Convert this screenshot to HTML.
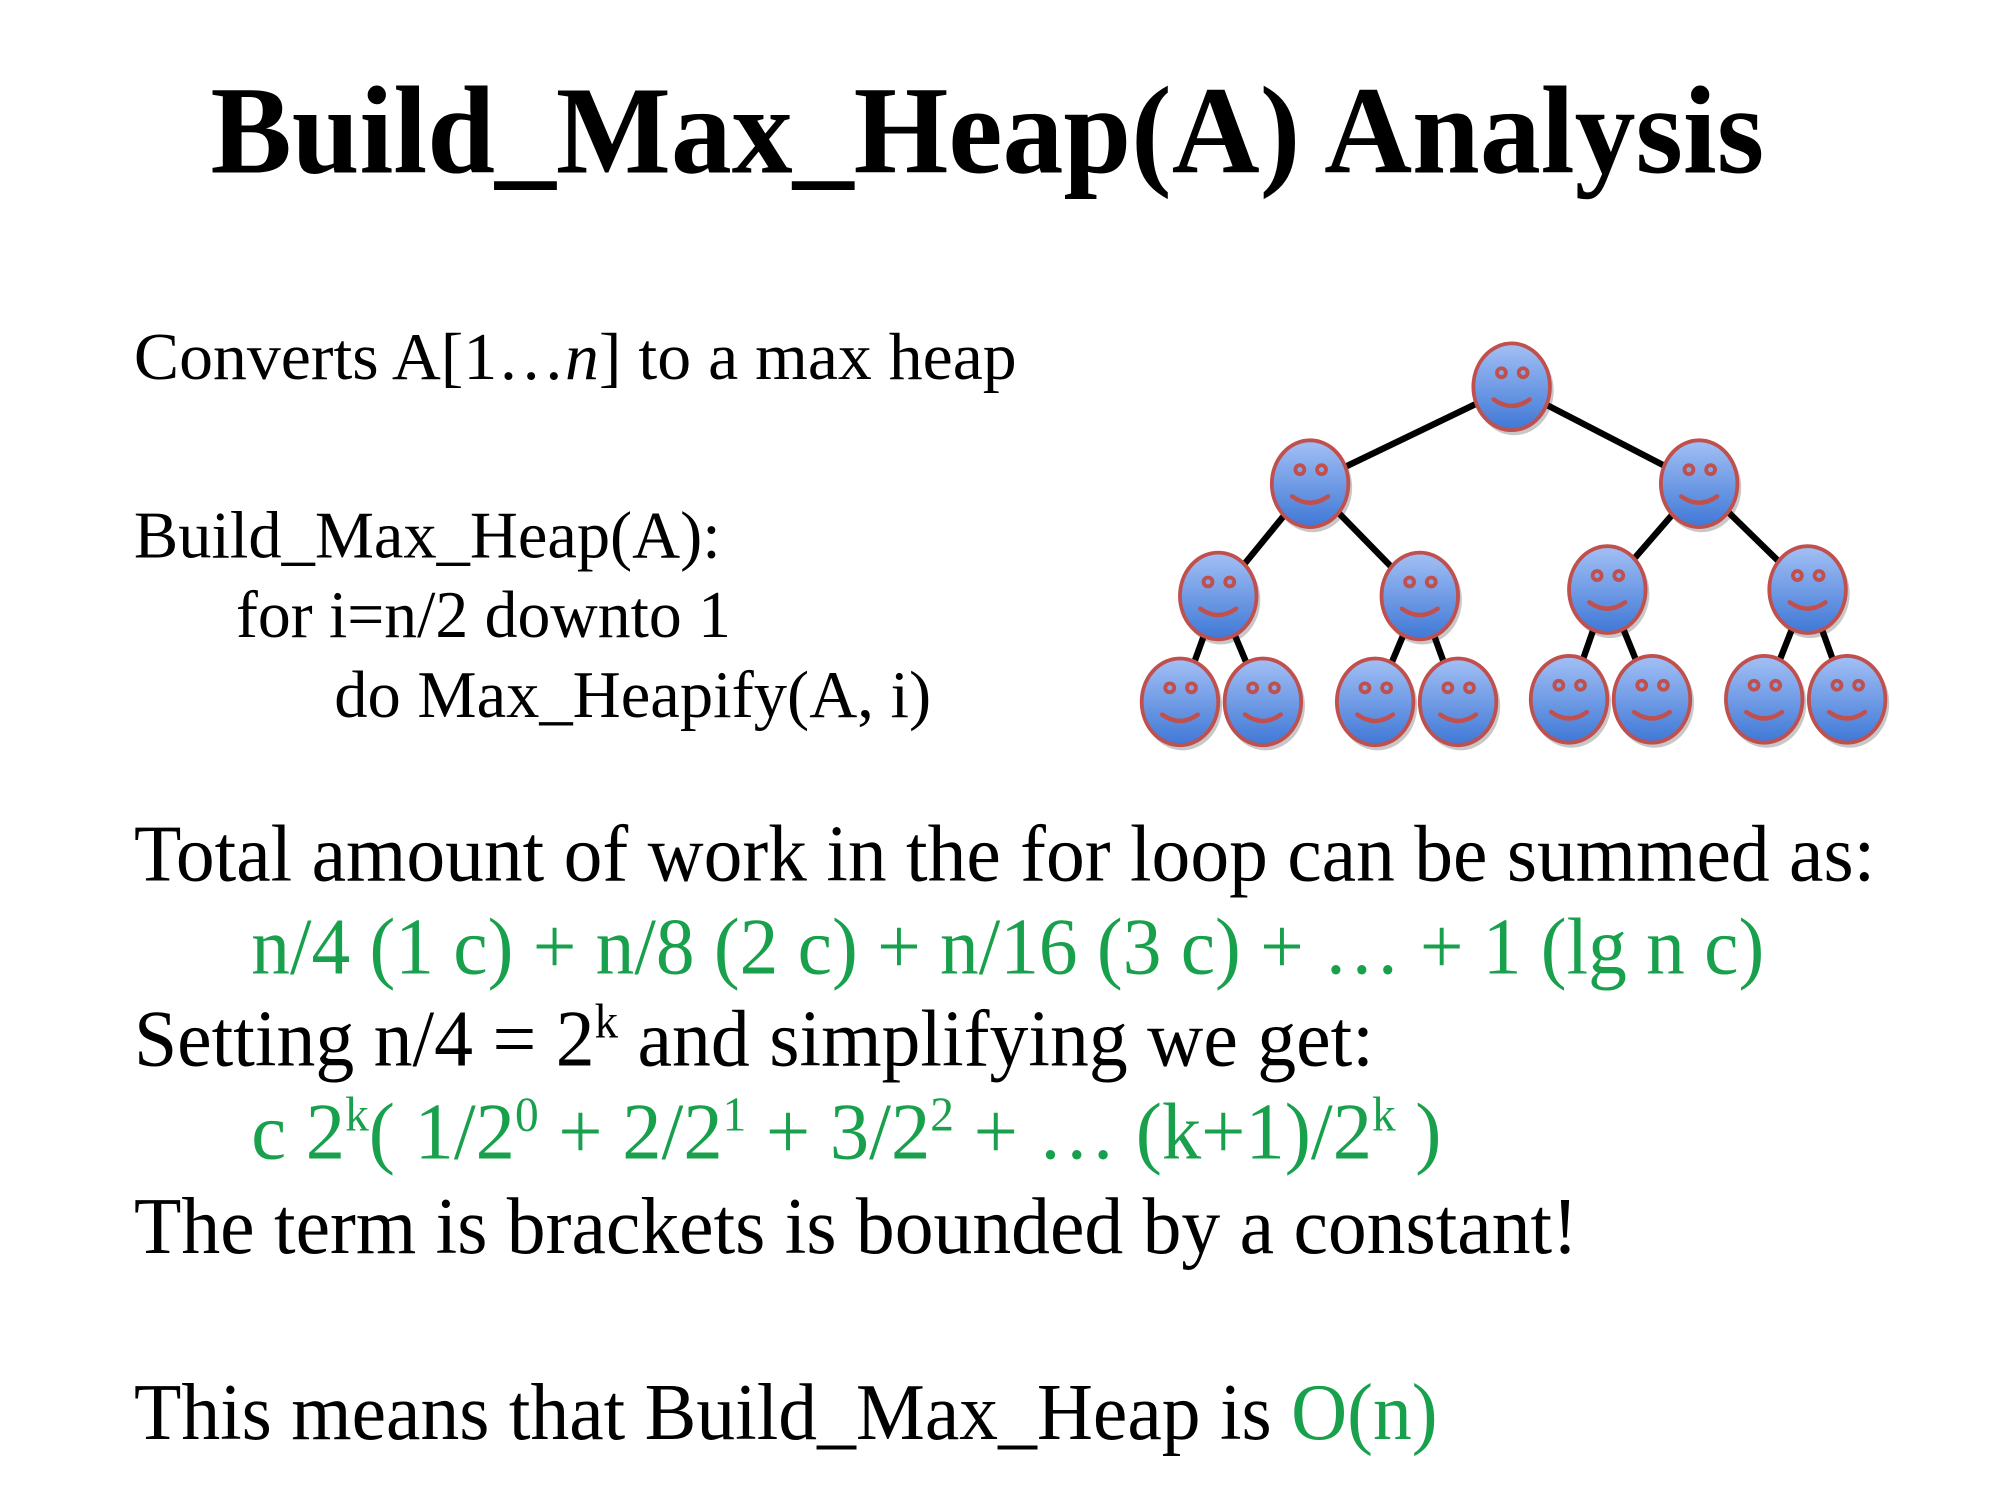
<!DOCTYPE html>
<html><head><meta charset="utf-8"><style>
html,body{margin:0;padding:0;background:#fff;}
svg{display:block;}
text{font-family:"Liberation Serif","Times New Roman",serif;}
</style></head><body>
<svg width="1990" height="1493" viewBox="0 0 1560 1170" xmlns="http://www.w3.org/2000/svg">
<defs>
<linearGradient id="g" x1="0" y1="0" x2="0" y2="1">
<stop offset="0" stop-color="#a3c0f5"/>
<stop offset="1" stop-color="#3f78d6"/>
</linearGradient>
<g id="face">
<ellipse cx="2" cy="3" rx="31" ry="35" fill="#222" opacity="0.25"/>
<ellipse cx="0" cy="0" rx="30" ry="34" fill="url(#g)" stroke="#c0504d" stroke-width="3"/>
<circle cx="-8" cy="-11" r="3.5" fill="none" stroke="#c0504d" stroke-width="3"/>
<circle cx="9" cy="-11" r="3.5" fill="none" stroke="#c0504d" stroke-width="3"/>
<path d="M-14 10 Q0 20 14 10" fill="none" stroke="#c0504d" stroke-width="3.5" stroke-linecap="round"/>
</g>
</defs>
<rect width="1560" height="1170" fill="#fff"/>
<text x="165" y="135" font-size="98" font-weight="bold" textLength="1218" lengthAdjust="spacingAndGlyphs">Build_Max_Heap(A) Analysis</text>

<text x="105" y="297" font-size="52" textLength="692" lengthAdjust="spacingAndGlyphs">Converts  A[1…<tspan font-style="italic">n</tspan>] to a max heap</text>
<text x="105" y="437" font-size="52" textLength="460" lengthAdjust="spacingAndGlyphs">Build_Max_Heap(A):</text>
<text x="185" y="499" font-size="52" textLength="388" lengthAdjust="spacingAndGlyphs">for i=n/2 downto 1</text>
<text x="262" y="562" font-size="52" textLength="468" lengthAdjust="spacingAndGlyphs">do Max_Heapify(A, i)</text>

<g stroke="#000" stroke-width="5">
<line x1="1185" y1="303" x2="1027" y2="379"/>
<line x1="1185" y1="303" x2="1332" y2="379"/>
<line x1="1027" y1="379" x2="955" y2="467"/>
<line x1="1027" y1="379" x2="1113" y2="467"/>
<line x1="1332" y1="379" x2="1260" y2="462"/>
<line x1="1332" y1="379" x2="1417" y2="462"/>
<line x1="955" y1="467" x2="925" y2="550"/>
<line x1="955" y1="467" x2="990" y2="550"/>
<line x1="1113" y1="467" x2="1078" y2="550"/>
<line x1="1113" y1="467" x2="1143" y2="550"/>
<line x1="1260" y1="462" x2="1230" y2="548"/>
<line x1="1260" y1="462" x2="1295" y2="548"/>
<line x1="1417" y1="462" x2="1383" y2="548"/>
<line x1="1417" y1="462" x2="1448" y2="548"/>
</g>
<use href="#face" x="1185" y="303"/>
<use href="#face" x="1027" y="379"/>
<use href="#face" x="1332" y="379"/>
<use href="#face" x="955" y="467"/>
<use href="#face" x="1113" y="467"/>
<use href="#face" x="1260" y="462"/>
<use href="#face" x="1417" y="462"/>
<use href="#face" x="925" y="550"/>
<use href="#face" x="990" y="550"/>
<use href="#face" x="1078" y="550"/>
<use href="#face" x="1143" y="550"/>
<use href="#face" x="1230" y="548"/>
<use href="#face" x="1295" y="548"/>
<use href="#face" x="1383" y="548"/>
<use href="#face" x="1448" y="548"/>

<text x="105" y="690" font-size="63" textLength="1365" lengthAdjust="spacingAndGlyphs">Total amount of work in the for loop can be summed as:</text>
<text x="197" y="763" font-size="63" fill="#18a04c" textLength="1186" lengthAdjust="spacingAndGlyphs">n/4 (1 c) + n/8 (2 c) + n/16 (3 c) + … + 1 (lg n c)</text>
<text x="105" y="835" font-size="63" textLength="972" lengthAdjust="spacingAndGlyphs">Setting n/4 = 2<tspan font-size="38" dy="-22">k</tspan><tspan dy="22"> and simplifying we get:</tspan></text>
<text x="197" y="908" font-size="63" fill="#18a04c" textLength="933" lengthAdjust="spacingAndGlyphs">c 2<tspan font-size="38" dy="-22">k</tspan><tspan dy="22">( 1/2</tspan><tspan font-size="38" dy="-22">0</tspan><tspan dy="22"> + 2/2</tspan><tspan font-size="38" dy="-22">1</tspan><tspan dy="22"> + 3/2</tspan><tspan font-size="38" dy="-22">2</tspan><tspan dy="22"> + … (k+1)/2</tspan><tspan font-size="38" dy="-22">k</tspan><tspan dy="22"> )</tspan></text>
<text x="105" y="982" font-size="63" textLength="1132" lengthAdjust="spacingAndGlyphs">The term is brackets is bounded by a constant!</text>
<text x="105" y="1128" font-size="63" textLength="1022" lengthAdjust="spacingAndGlyphs">This means that Build_Max_Heap is <tspan fill="#18a04c">O(n)</tspan></text>
</svg>
</body></html>
